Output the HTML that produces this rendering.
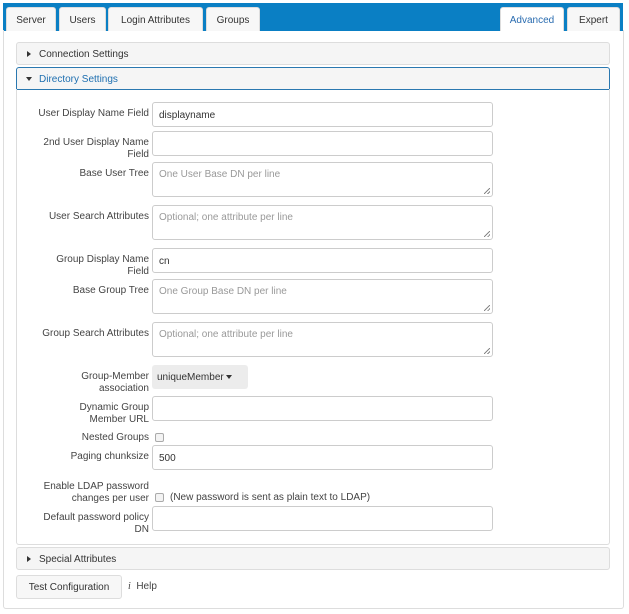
<!DOCTYPE html>
<html><head><meta charset="utf-8"><style>
*{box-sizing:border-box;margin:0;padding:0}
body{width:629px;height:614px;background:#fff;font-family:"Liberation Sans",sans-serif;font-size:10px;color:#333;position:relative;overflow:hidden}
.a{position:absolute}
.bar{left:3px;top:3px;width:620px;height:28px;background:#0a7fc4}
.outer{left:3px;top:30px;width:621px;height:579px;border:1px solid #ddd;border-top:none;border-radius:0 0 3px 3px}
.tab{position:absolute;top:7px;height:24px;background:#f7f7f7;border:1px solid #ddd;border-bottom:none;border-radius:3px 3px 0 0;text-align:center;line-height:25px;font-size:10px;color:#333}
.hdr{position:absolute;left:16px;width:594px;height:23px;background:#f5f5f5;border:1px solid #ddd;border-radius:3px;line-height:23px;padding-left:22px;color:#333}
.hdr:before{content:"";position:absolute;left:10px;top:8px;border-left:4px solid #333;border-top:3px solid transparent;border-bottom:3px solid transparent}
.open{border-color:#2a78b0;color:#1e6fb0;border-radius:3px 3px 0 0}
.open:before{left:9px;top:9px;border-top:4px solid #333;border-left:3px solid transparent;border-right:3px solid transparent;border-bottom:none}
.body{left:16px;top:89px;width:594px;height:456px;border:1px solid #ddd;border-top:none;border-radius:0 0 3px 3px}
.lbl{position:absolute;right:480px;text-align:right;line-height:12px;color:#444;white-space:nowrap}
.in{position:absolute;left:152px;width:341px;height:25px;border:1px solid #ccc;border-radius:3px;padding:0 6px;line-height:25px;color:#333}
.ta{height:35px;line-height:24px;color:#999}
.ta:after{content:"";position:absolute;right:2px;bottom:2px;width:6px;height:6px;background:linear-gradient(135deg,transparent 45%,#888 45%,#888 55%,transparent 55%,transparent 75%,#888 75%,#888 85%,transparent 85%)}
.cb{position:absolute;width:9px;height:9px;border:1px solid #aaa;border-radius:2px;background:#f3f3f3}
</style></head><body>
<div class="a bar"></div>
<div class="a outer"></div>
<div class="tab" style="left:6px;width:50px">Server</div>
<div class="tab" style="left:59px;width:47px">Users</div>
<div class="tab" style="left:108px;width:95px">Login Attributes</div>
<div class="tab" style="left:206px;width:54px">Groups</div>
<div class="tab" style="left:500px;width:64px;background:#fff;color:#2a6cb0">Advanced</div>
<div class="tab" style="left:567px;width:53px">Expert</div>

<div class="hdr" style="top:42px">Connection Settings</div>
<div class="hdr open" style="top:67px">Directory Settings</div>
<div class="a body"></div>

<div class="lbl" style="top:108px">User Display Name Field</div>
<div class="in" style="top:102px">displayname</div>
<div class="lbl" style="top:137px">2nd User Display Name<br>Field</div>
<div class="in" style="top:131px"></div>
<div class="lbl" style="top:168px">Base User Tree</div>
<div class="in ta" style="top:162px">One User Base DN per line</div>
<div class="lbl" style="top:211px">User Search Attributes</div>
<div class="in ta" style="top:205px">Optional; one attribute per line</div>
<div class="lbl" style="top:254px">Group Display Name<br>Field</div>
<div class="in" style="top:248px">cn</div>
<div class="lbl" style="top:285px">Base Group Tree</div>
<div class="in ta" style="top:279px">One Group Base DN per line</div>
<div class="lbl" style="top:328px">Group Search Attributes</div>
<div class="in ta" style="top:322px">Optional; one attribute per line</div>
<div class="lbl" style="top:371px">Group-Member<br>association</div>
<div class="a" style="left:152px;top:365px;width:96px;height:24px;background:#ececec;border-radius:3px;line-height:25px;padding-left:5px;color:#333">uniqueMember <span style="display:inline-block;border-top:4px solid #333;border-left:3px solid transparent;border-right:3px solid transparent;vertical-align:middle"></span></div>
<div class="lbl" style="top:402px">Dynamic Group<br>Member URL</div>
<div class="in" style="top:396px"></div>
<div class="lbl" style="top:432px">Nested Groups</div>
<div class="cb" style="left:155px;top:433px"></div>
<div class="lbl" style="top:451px">Paging chunksize</div>
<div class="in" style="top:445px">500</div>
<div class="lbl" style="top:481px">Enable LDAP password<br>changes per user</div>
<div class="cb" style="left:155px;top:493px"></div>
<div class="a" style="left:170px;top:492px;color:#444">(New password is sent as plain text to LDAP)</div>
<div class="lbl" style="top:512px">Default password policy<br>DN</div>
<div class="in" style="top:506px"></div>

<div class="hdr" style="top:547px">Special Attributes</div>
<div class="a" style="left:16px;top:575px;width:106px;height:24px;background:#f7f7f7;border:1px solid #ddd;border-radius:3px;text-align:center;line-height:23px;color:#333">Test Configuration</div>
<div class="a" style="left:128px;top:581px;color:#444"><i style="font-family:'Liberation Serif',serif">i</i>&nbsp; Help</div>
</body></html>
